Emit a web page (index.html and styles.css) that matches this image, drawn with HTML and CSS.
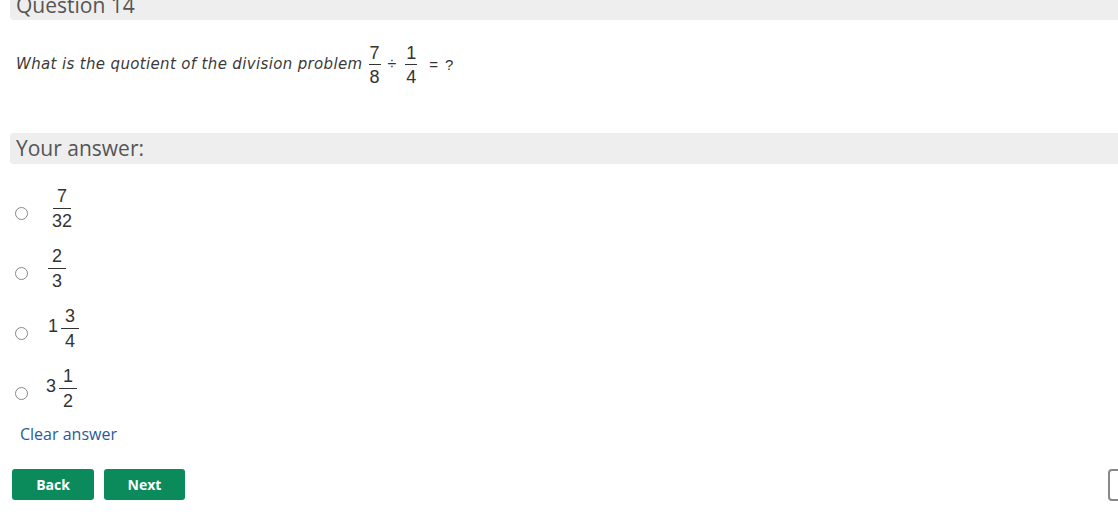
FILE: index.html
```html
<!DOCTYPE html>
<html>
<head>
<meta charset="utf-8">
<link rel="stylesheet" href="styles.css">
</head>
<body>
<div class="page">
  <div class="q-head">Question 14</div>
  <div class="q-body">
    <p class="prompt"><span class="prompt-text">What is the quotient of the division problem</span>
      <span class="frac"><span class="num">7</span><span class="den">8</span></span>
      <span class="op div">÷</span>
      <span class="frac"><span class="num">1</span><span class="den">4</span></span>
      <span class="op eq">=</span>
      <span class="op q">?</span>
    </p>
  </div>
  <div class="a-head">Your answer:</div>
  <ul class="options">
    <li class="option"><span class="radio"></span><span class="val"><span class="frac big"><span class="num">7</span><span class="den">32</span></span></span></li>
    <li class="option"><span class="radio"></span><span class="val"><span class="frac big"><span class="num">2</span><span class="den">3</span></span></span></li>
    <li class="option"><span class="radio"></span><span class="val"><span class="whole">1</span><span class="frac big"><span class="num">3</span><span class="den">4</span></span></span></li>
    <li class="option"><span class="radio"></span><span class="val shift"><span class="whole">3</span><span class="frac big"><span class="num">1</span><span class="den">2</span></span></span></li>
  </ul>
  <a class="clear" href="#">Clear answer</a>
  <div class="nav">
    <button class="btn">Back</button>
    <button class="btn">Next</button>
    <button class="btn-outline"></button>
  </div>
</div>
</body>
</html>
```
FILE: styles.css
```css
html, body {
  margin: 0;
  padding: 0;
  overflow: hidden;
  background: #fff;
}
.page {
  font-family: "Open Sans", sans-serif;
  color: #333;
}
.q-head {
  margin: -9px 0 0 10px;
  padding: 0 0 1px 6px;
  line-height: 28px;
  font-size: 21px;
  color: #555;
  background: #eee;
  border-bottom-left-radius: 4px;
}
.q-body {
  padding: 25px 0 0 16px;
  height: 113px;
  box-sizing: border-box;
}
.prompt {
  margin: 0;
  display: flex;
  align-items: center;
  font-family: "DejaVu Sans", sans-serif;
  font-style: italic;
  font-size: 15px;
  color: #3a3a3a;
}
.prompt-text {
  letter-spacing: 0.35px;
  margin-top: -2px;
}
.frac {
  display: inline-flex;
  flex-direction: column;
  align-items: center;
  font-family: "Liberation Sans", Arial, sans-serif;
  font-style: normal;
  font-size: 18px;
  line-height: 16px;
  color: #333;
  margin-left: 6px;
}
.frac .num {
  padding: 0 1px 3px;
  border-bottom: 1px solid #333;
  min-width: 10px;
  text-align: center;
}
.frac .den {
  padding-top: 4px;
}
.op {
  font-family: "Liberation Sans", Arial, sans-serif;
  font-style: normal;
  font-size: 15px;
  color: #333;
  margin-left: 6px;
  margin-top: -2px;
}
.op.div {
  font-size: 16px;
  margin-left: 7px;
  margin-right: 3px;
}
.op.eq {
  margin-left: 12px;
}
.op.q {
  margin-left: 7px;
}
.a-head {
  margin-left: 10px;
  padding-left: 6px;
  height: 31px;
  line-height: 31px;
  font-size: 21px;
  color: #555;
  background: #eee;
  border-top-left-radius: 3px;
  border-bottom-left-radius: 3px;
}
.options {
  list-style: none;
  margin: 0;
  padding: 18px 0 0 0;
}
.option {
  display: flex;
  align-items: center;
  height: 60px;
  padding-left: 15px;
}
.radio {
  width: 11px;
  height: 11px;
  border: 1px solid #888;
  border-radius: 50%;
  background: #fff;
  flex: none;
  margin-top: 2px;
}
.val {
  display: flex;
  align-items: center;
  margin-left: 20px;
  margin-top: -8px;
  font-family: "Liberation Sans", Arial, sans-serif;
  font-size: 18px;
  color: #333;
}
.val.shift {
  margin-left: 18px;
}
.val .frac {
  margin-left: 0;
}
.frac.big .num {
  padding: 0 4px 4px;
  min-width: 10px;
}
.frac.big .den {
  padding: 4px 4px 0;
}
.whole {
  margin-right: 3px;
  margin-top: -4px;
}
.clear {
  display: block;
  margin: 1px 0 0 20px;
  font-size: 16px;
  line-height: 22px;
  color: #1f5c99;
  text-decoration: none;
}
.nav {
  display: flex;
  gap: 10px;
  margin: 24px 0 0 12px;
}
.btn {
  width: 82px;
  height: 31px;
  border: 0;
  border-radius: 3px;
  background: #0b8a5b;
  color: #fff;
  font-family: "Open Sans", sans-serif;
  font-weight: 700;
  font-size: 14px;
  padding: 0;
}
.btn + .btn {
  width: 81px;
}
.btn-outline {
  margin-left: auto;
  margin-right: -80px;
  width: 90px;
  height: 32px;
  border: 2px solid #888;
  border-radius: 4px;
  background: #fff;
}
```
